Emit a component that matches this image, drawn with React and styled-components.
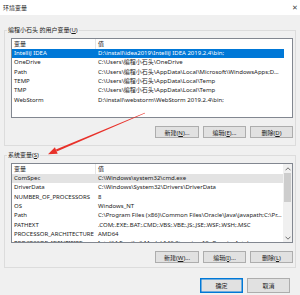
import styled, { createGlobalStyle } from 'styled-components';

const GlobalStyle = createGlobalStyle`
  html, body {
    margin: 0;
    padding: 0;
    background: #f0f0f0;
  }
  body {
    width: 300px;
    height: 295px;
    overflow: hidden;
  }
`;

const Window = styled.div`
  position: relative;
  width: 300px;
  height: 295px;
  display: flex;
  flex-direction: column;
  background: #f0f0f0;
  font-family: 'Noto Sans', 'Noto Sans CJK SC', sans-serif;
  font-size: 6px;
  color: #1a1a1a;
  overflow: hidden;
`;

const TitleBar = styled.div`
  height: 15px;
  flex: none;
  display: flex;
  align-items: center;
  justify-content: space-between;
  padding: 0 2px 0 3px;
  background: #fff;
`;

const CloseGlyph = styled.span`
  font-size: 7px;
  color: #444;
  line-height: 1;
`;

const Content = styled.div`
  display: flex;
  flex-direction: column;
  padding: 0 4px;
  flex: 1;
`;

const Group = styled.fieldset`
  margin: ${(p) => p.$top}px 0 0;
  padding: 4px 2px ${(p) => p.$bottom}px 6px;
  border: 1px solid #dcdcdc;
  min-width: 0;
`;

const Legend = styled.legend`
  margin-left: -4px;
  padding: 0 1px;
  height: 8px;
  line-height: 8px;
`;

const ListBox = styled.div`
  height: 80px;
  box-sizing: border-box;
  border: 1px solid #828790;
  background: #fff;
  display: flex;
  overflow: hidden;
`;

const Rows = styled.div`
  flex: 1;
  min-width: 0;
  display: flex;
  flex-direction: column;
  overflow: hidden;
`;

const Row = styled.div`
  flex: none;
  display: grid;
  grid-template-columns: 84px 188px;
  width: 272px;
  height: ${(p) => (p.$header ? 10 : 9.3)}px;
  align-items: center;
  background: ${(p) =>
    p.$state === 'selected'
      ? '#0078d7'
      : p.$state === 'inactive'
      ? '#e3e3e3'
      : 'transparent'};
  color: ${(p) => (p.$state === 'selected' ? '#fff' : '#1a1a1a')};
`;

const Cell = styled.span`
  padding-left: 2px;
  white-space: nowrap;
  overflow: hidden;
  line-height: 9px;
`;

const HeadCell = styled(Cell)`
  height: 100%;
  line-height: 10px;
  border-right: ${(p) => (p.$divider ? '1px solid #e5e5e5' : 'none')};
`;

const ScrollBar = styled.div`
  width: 9px;
  flex: none;
  display: flex;
  flex-direction: column;
  background: #f0f0f0;
`;

const ScrollArrow = styled.div`
  height: 9px;
  flex: none;
  display: flex;
  align-items: center;
  justify-content: center;
`;

const Track = styled.div`
  flex: 1;
  display: flex;
  justify-content: center;
`;

const Thumb = styled.div`
  width: 7px;
  height: 29px;
  background: #cdcdcd;
`;

const ButtonRow = styled.div`
  display: flex;
  justify-content: flex-end;
  gap: 4px;
  margin-top: 8px;
`;

const Button = styled.button`
  width: ${(p) => p.$w}px;
  height: ${(p) => p.$h || 12}px;
  padding: 0;
  box-sizing: border-box;
  border: 1px solid ${(p) => (p.$default ? '#0078d7' : '#adadad')};
  box-shadow: ${(p) => (p.$default ? 'inset 0 0 0 0.5px #0078d7' : 'none')};
  background: #e1e1e1;
  font: inherit;
  color: #1a1a1a;
`;

const Footer = styled.div`
  display: flex;
  justify-content: flex-end;
  gap: 4px;
  padding: 10px 6px 0 0;
`;

const ArrowOverlay = styled.svg`
  position: absolute;
  left: 0;
  top: 0;
  pointer-events: none;
`;

const userVars = [
  ['IntelliJ IDEA', 'D:\\install\\idea2019\\IntelliJ IDEA 2019.2.4\\bin;'],
  ['OneDrive', 'C:\\Users\\编程小石头\\OneDrive'],
  ['Path', 'C:\\Users\\编程小石头\\AppData\\Local\\Microsoft\\WindowsApps;D...'],
  ['TEMP', 'C:\\Users\\编程小石头\\AppData\\Local\\Temp'],
  ['TMP', 'C:\\Users\\编程小石头\\AppData\\Local\\Temp'],
  ['WebStorm', 'D:\\install\\webstorm\\WebStorm 2019.2.4\\bin;'],
];

const sysVars = [
  ['ComSpec', 'C:\\Windows\\system32\\cmd.exe'],
  ['DriverData', 'C:\\Windows\\System32\\Drivers\\DriverData'],
  ['NUMBER_OF_PROCESSORS', '8'],
  ['OS', 'Windows_NT'],
  ['Path', 'C:\\Program Files (x86)\\Common Files\\Oracle\\Java\\javapath;C:\\Pr...'],
  ['PATHEXT', '.COM;.EXE;.BAT;.CMD;.VBS;.VBE;.JS;.JSE;.WSF;.WSH;.MSC'],
  ['PROCESSOR_ARCHITECTURE', 'AMD64'],
  ['PROCESSOR_IDENTIFIER', 'Intel64 Family 6 Model 142 Stepping 10, GenuineIntel'],
];

function VarList({ rows, selected, selectedState, scroll }) {
  return (
    <ListBox>
      <Rows>
        <Row $header>
          <HeadCell $divider>变量</HeadCell>
          <HeadCell>值</HeadCell>
        </Row>
        {rows.map(([name, value], i) => (
          <Row key={name + i} $state={i === selected ? selectedState : undefined}>
            <Cell>{name}</Cell>
            <Cell>{value}</Cell>
          </Row>
        ))}
      </Rows>
      {scroll && (
        <ScrollBar>
          <ScrollArrow>
            <svg width="6" height="4" viewBox="0 0 6 4">
              <polyline points="0.5,3.3 3,0.8 5.5,3.3" fill="none" stroke="#606060" strokeWidth="0.9" />
            </svg>
          </ScrollArrow>
          <Track>
            <Thumb />
          </Track>
          <ScrollArrow>
            <svg width="6" height="4" viewBox="0 0 6 4">
              <polyline points="0.5,0.7 3,3.2 5.5,0.7" fill="none" stroke="#606060" strokeWidth="0.9" />
            </svg>
          </ScrollArrow>
        </ScrollBar>
      )}
    </ListBox>
  );
}

export default function App() {
  return (
    <Window>
      <GlobalStyle />
      <TitleBar>
        <span>环境变量</span>
        <CloseGlyph>✕</CloseGlyph>
      </TitleBar>
      <Content>
        <Group $top={11} $bottom={7}>
          <Legend>
            编程小石头 的用户变量(<u>U</u>)
          </Legend>
          <VarList rows={userVars} selected={0} selectedState="selected" />
          <ButtonRow>
            <Button $w={44}>新建(<u>N</u>)...</Button>
            <Button $w={43}>编辑(<u>E</u>)...</Button>
            <Button $w={43}>删除(<u>D</u>)</Button>
          </ButtonRow>
        </Group>
        <Group $top={5} $bottom={4}>
          <Legend>
            系统变量(<u>S</u>)
          </Legend>
          <VarList rows={sysVars} selected={0} selectedState="inactive" scroll />
          <ButtonRow>
            <Button $w={44}>新建(<u>W</u>)...</Button>
            <Button $w={43}>编辑(<u>I</u>)...</Button>
            <Button $w={43}>删除(<u>L</u>)</Button>
          </ButtonRow>
        </Group>
        <Footer>
          <Button $w={43} $h={15} $default>确定</Button>
          <Button $w={43} $h={15}>取消</Button>
        </Footer>
      </Content>
      <ArrowOverlay width="300" height="295" viewBox="0 0 300 295">
        <polygon
          points="145.1,113.3 144.9,112.7 55.9,149.5 56.7,151.5"
          fill="#e8312a"
        />
        <polygon points="48,154.2 57.7,153.7 54.9,147.3" fill="#e8312a" />
      </ArrowOverlay>
    </Window>
  );
}
